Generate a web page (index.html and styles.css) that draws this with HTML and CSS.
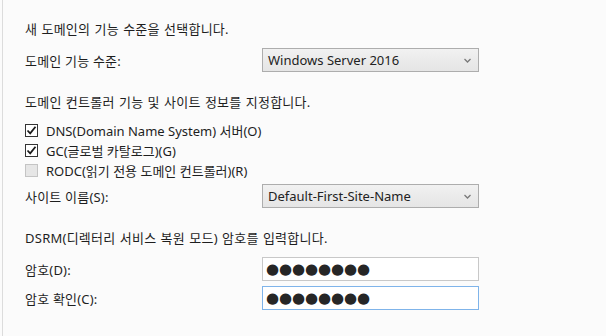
FILE: index.html
```html
<!DOCTYPE html>
<html lang="ko">
<head>
    <meta charset="UTF-8">
    <title>도메인 컨트롤러 옵션</title>
    <link rel="stylesheet" href="styles.css">
</head>
<body>

    <div class="panel">
        <p class="intro first">새 도메인의 기능 수준을 선택합니다.</p>

        <div class="field">
            <span class="label">도메인 기능 수준:</span>
            <div class="select">
                <span>Windows Server 2016</span>
                <svg class="chevron" width="7" height="5" viewBox="0 0 7 5"><path d="M0.5 1 L3.5 4 L6.5 1" fill="none" stroke="#7a7a7a" stroke-width="1.3"/></svg>
            </div>
        </div>

        <p class="intro gap">도메인 컨트롤러 기능 및 사이트 정보를 지정합니다.</p>

        <div class="checks">
            <div class="check">
                <span class="box checked"><svg width="11" height="11" viewBox="0 0 11 11"><path d="M1.5 5.5 L4.2 8.3 L9.5 1.8" fill="none" stroke="#1a1a1a" stroke-width="1.8"/></svg></span>
                <span>DNS(Domain Name System) 서버(O)</span>
            </div>
            <div class="check">
                <span class="box checked"><svg width="11" height="11" viewBox="0 0 11 11"><path d="M1.5 5.5 L4.2 8.3 L9.5 1.8" fill="none" stroke="#1a1a1a" stroke-width="1.8"/></svg></span>
                <span>GC(글로벌 카탈로그)(G)</span>
            </div>
            <div class="check">
                <span class="box disabled"></span>
                <span>RODC(읽기 전용 도메인 컨트롤러)(R)</span>
            </div>
        </div>

        <div class="field site">
            <span class="label">사이트 이름(S):</span>
            <div class="select">
                <span>Default-First-Site-Name</span>
                <svg class="chevron" width="7" height="5" viewBox="0 0 7 5"><path d="M0.5 1 L3.5 4 L6.5 1" fill="none" stroke="#7a7a7a" stroke-width="1.3"/></svg>
            </div>
        </div>

        <p class="intro gap">DSRM(디렉터리 서비스 복원 모드) 암호를 입력합니다.</p>

        <div class="field pw-first">
            <span class="label">암호(D):</span>
            <div class="password"><span class="dots">●●●●●●●●</span></div>
        </div>
        <div class="field pw-second">
            <span class="label">암호 확인(C):</span>
            <div class="password focused"><span class="dots">●●●●●●●●</span></div>
        </div>
    </div>

</body>
</html>
```

FILE: styles.css
```css
* {
    margin: 0;
    padding: 0;
    box-sizing: border-box;
}
body {
    font-family: 'Noto Sans', 'Noto Sans CJK KR', sans-serif;
    font-size: 13px;
    color: #1e1e1e;
    background-color: #fbfbfb;
    height: 336px;
    overflow: hidden;
}
.panel {
    margin-left: 2px;
    height: 336px;
    border-left: 1px solid #dcdcdc;
    padding: 21px 0 0 22px;
}
.intro {
    height: 16px;
    line-height: 16px;
    letter-spacing: 0.25px;
    word-spacing: 0.6px;
}
.intro.gap {
    margin-top: 22px;
}
.field {
    display: flex;
    align-items: center;
    margin-top: 11px;
}
.field.site {
    margin-top: 4px;
}
.field.pw-second {
    margin-top: 5px;
}
.label {
    width: 237px;
    flex-shrink: 0;
    letter-spacing: 0.2px;
}
.select {
    width: 217px;
    height: 24px;
    border: 1px solid #adadad;
    background: linear-gradient(#f1f1f1, #e5e5e5);
    display: flex;
    align-items: center;
    justify-content: space-between;
    padding: 0 7px 0 5px;
    color: #222;
}
.chevron {
    display: block;
}
.checks {
    margin-top: 10px;
}
.check {
    display: flex;
    align-items: center;
    height: 20px;
    gap: 8px;
}
.box {
    width: 13px;
    height: 13px;
    border: 1px solid #333;
    background-color: #fff;
    display: flex;
    align-items: center;
    justify-content: center;
}
.box.disabled {
    border-color: #c4c4c4;
    background-color: #e6e6e6;
}
.password {
    width: 217px;
    height: 24px;
    border: 1px solid #c8c8c8;
    background-color: #fff;
    display: flex;
    align-items: center;
    padding-left: 3px;
}
.password.focused {
    border-color: #7fb4ea;
}
.dots {
    font-family: 'DejaVu Sans', sans-serif;
    font-size: 15px;
    color: #262626;
    letter-spacing: -0.1px;
}
```
